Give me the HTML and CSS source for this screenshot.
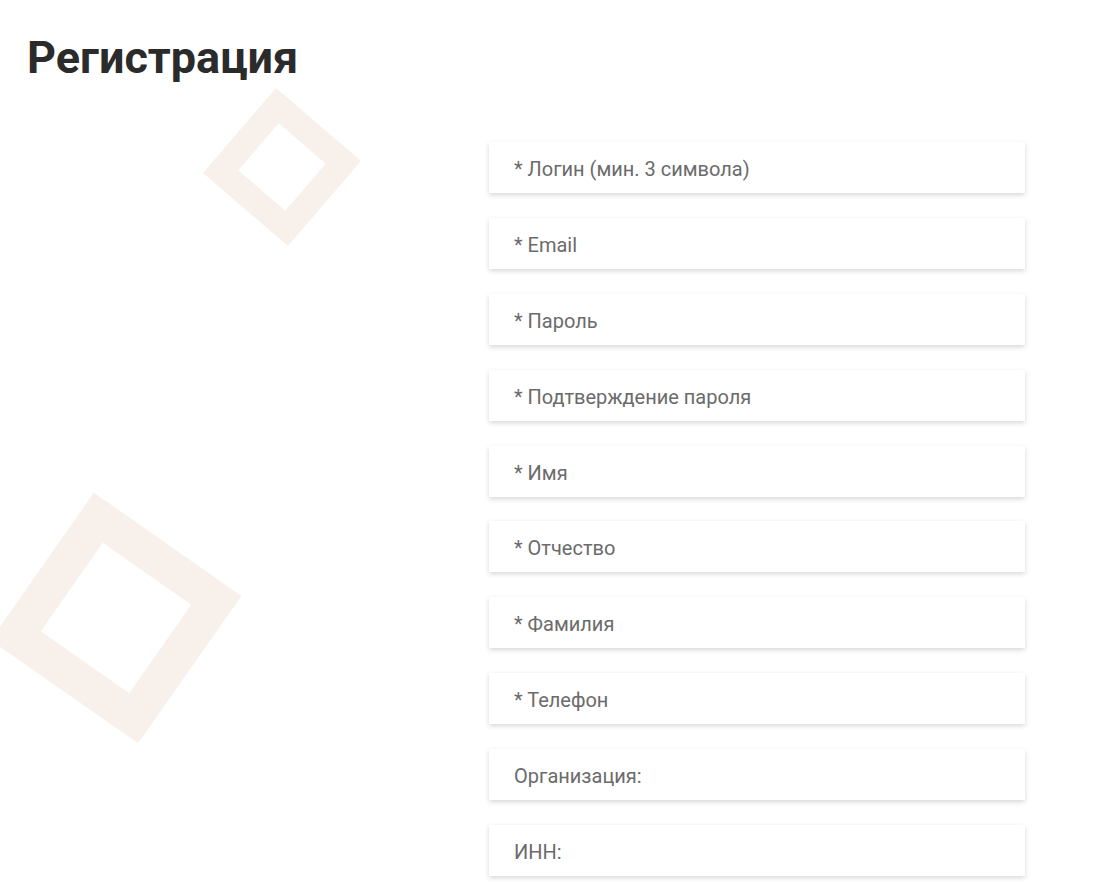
FILE: index.html
```html
<!DOCTYPE html>
<html lang="ru">
<head>
<meta charset="utf-8">
<title>Регистрация</title>
<link rel="stylesheet" href="styles.css">
</head>
<body>
<div class="page">
  <div class="deco deco-top"></div>
  <div class="deco deco-bottom"></div>
  <h1 class="title">Регистрация</h1>
  <form class="reg-form">
    <input class="field" type="text" placeholder="* Логин (мин. 3 символа)">
    <input class="field" type="email" placeholder="* Email">
    <input class="field" type="password" placeholder="* Пароль">
    <input class="field" type="password" placeholder="* Подтверждение пароля">
    <input class="field" type="text" placeholder="* Имя">
    <input class="field" type="text" placeholder="* Отчество">
    <input class="field" type="text" placeholder="* Фамилия">
    <input class="field" type="tel" placeholder="* Телефон">
    <input class="field" type="text" placeholder="Организация:">
    <input class="field" type="text" placeholder="ИНН:">
  </form>
</div>
</body>
</html>
```
FILE: styles.css
```css
* { box-sizing: border-box; }
html, body { margin: 0; padding: 0; background: #fff; }
body { font-family: Roboto, "Open Sans", sans-serif; }
.page {
  position: relative;
  min-height: 889px;
  padding: 28px 0 40px 27px;
  overflow: hidden;
}
.deco {
  position: absolute;
  border-style: solid;
  border-color: #f7f0eb;
  z-index: 0;
}
.deco-top {
  width: 112px; height: 112px;
  border-width: 25px;
  left: 225.5px; top: 110.5px;
  transform: rotate(40.7deg);
}
.deco-bottom {
  width: 180px; height: 180px;
  border-width: 36px;
  left: 25.5px; top: 528px;
  transform: rotate(35deg);
}
.title {
  position: relative;
  z-index: 1;
  margin: 0;
  font-family: Roboto, sans-serif;
  font-weight: 700;
  font-size: 45px;
  line-height: 60px;
  color: #2b2b2b;
}
.reg-form {
  position: relative;
  z-index: 1;
  margin: 54px 0 0 462px;
  width: 536px;
  display: flex;
  flex-direction: column;
  gap: 24.9px;
}
.field {
  display: block;
  width: 100%;
  height: 51px;
  border: 0;
  outline: 0;
  background: #fff;
  box-shadow: 0 2px 5px rgba(0,0,0,0.16);
  padding: 3px 25px 0;
  font-family: Roboto, sans-serif;
  font-size: 20px;
  color: #555;
}
.field::placeholder { color: #6b6b6b; opacity: 1; }
```
